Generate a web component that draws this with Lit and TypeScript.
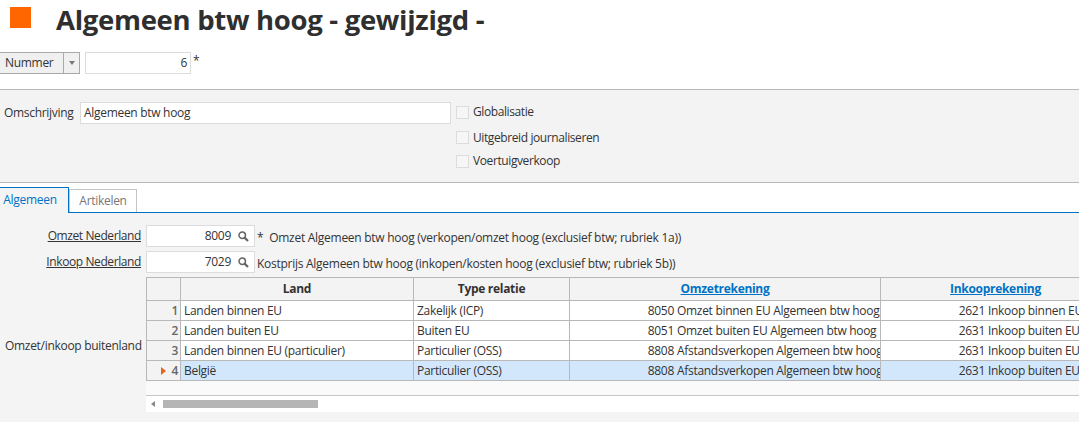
import { LitElement, html, css, svg } from "lit";
import { customElement } from "lit/decorators.js";

const FONT = css`"Open Sans", "Noto Sans", sans-serif`;

const rows = [
  ["1", "Landen binnen EU", "Zakelijk (ICP)", "8050", "Omzet binnen EU Algemeen btw hoog", "2621", "Inkoop binnen EU"],
  ["2", "Landen buiten EU", "Buiten EU", "8051", "Omzet buiten EU Algemeen btw hoog", "2631", "Inkoop buiten EU"],
  ["3", "Landen binnen EU (particulier)", "Particulier (OSS)", "8808", "Afstandsverkopen Algemeen btw hoog", "2631", "Inkoop buiten EU"],
  ["4", "België", "Particulier (OSS)", "8808", "Afstandsverkopen Algemeen btw hoog", "2631", "Inkoop buiten EU"],
];

const lens = svg`<svg class="lens" width="11" height="11" viewBox="0 0 13 13"><circle cx="5" cy="5" r="3.8" fill="none" stroke="#666" stroke-width="1.8"/><path d="M7.8 7.8 L11.8 11.8" stroke="#666" stroke-width="2.6" fill="none"/></svg>`;

@customElement("app-root")
export class AppRoot extends LitElement {
  static styles = css`
    :host { display: block; width: 1079px; height: 422px; overflow: hidden; background: #fff; font: 12px/16px ${FONT}; color: #333; letter-spacing: -0.3px; }
    * { box-sizing: border-box; }
    .head { height: 52px; display: flex; align-items: flex-start; padding: 7px 0 0 10px; }
    .square { width: 21px; height: 21px; background: #ff6600; }
    h1 { margin: -6px 0 0 25px; font: 700 27.5px/38px ${FONT}; letter-spacing: -0.3px; color: #2f2f2f; }
    .numrow { display: flex; align-items: flex-start; border-bottom: 1px solid #b8b8b8; height: 38px; }
    .numbtn { width: 81px; height: 22px; margin-left: -1px; border: 1px solid #a9a9a9; background: #f0f0f0; display: flex; }
    .numbtn .lbl { width: 64px; padding: 2px 0 0 5px; border-right: 1px solid #a9a9a9; }
    .numbtn .arr { flex: 1; display: flex; align-items: center; justify-content: center; }
    .tri { width: 0; height: 0; border: 3.5px solid transparent; border-top: 4px solid #777; border-bottom: 0; }
    .input { background: #fff; border: 1px solid #dcdcdc; height: 22px; display: flex; align-items: center; padding: 0 3px; }
    .num { width: 106px; margin-left: 5px; justify-content: flex-end; }
    .star { margin: 1px 0 0 2px; line-height: 15px; }
    .panel { background: #f3f3f3; height: 93px; border-bottom: 1px solid #b8b8b8; display: grid; grid-template-columns: 80px 371px 1fr; padding-top: 12px; }
    .panel .olabel { padding: 3px 0 0 4px; }
    .checks { display: flex; flex-direction: column; padding: 0 0 0 5px; margin-top: -1px; letter-spacing: -0.4px; }
    .check { display: flex; align-items: center; height: 22px; }
    .check.mid { height: 29px; }
    .check.last { height: 18px; }
    .box { width: 13px; height: 13px; border: 1px solid #dcdcdc; background: #f6f6f6; margin-right: 4px; }
    .tabs { height: 30px; display: flex; align-items: flex-end; border-bottom: 1px solid #0072c6; }
    .tab { display: flex; align-items: center; justify-content: center; }
    .tab.on { width: 69px; height: 26px; margin-bottom: -1px; background: #f4f4f4; color: #0072c6; border-top: 1px solid #0072c6; border-right: 1px solid #0072c6; padding: 0 8px 1px 0; }
    .tab.off { width: 68px; height: 23px; color: #777; border: 1px solid #c4c4c4; border-bottom: 0; padding-bottom: 1px; }
    .body { background: #f4f4f4; height: 209px; padding-top: 12px; }
    .form { display: grid; grid-template-columns: 141px 109px 1fr; column-gap: 5px; grid-auto-rows: 26px; }
    .form .label { text-align: right; text-decoration: underline; padding-top: 3px; letter-spacing: -0.4px; }
    .acct { justify-content: flex-end; gap: 7px; padding-right: 5px; height: 22px; }
    .lens { flex: none; }
    .desc { padding-top: 5px; white-space: nowrap; margin-left: -3px; letter-spacing: -0.27px; }
    .desc .st { margin-right: 3px; }
    .lower { display: flex; }
    .side { width: 146px; padding: 61px 0 0 5px; white-space: nowrap; }
    .gridwrap { width: 933px; overflow: hidden; }
    .grid { display: grid; grid-template-columns: 35px 233px 156px 311px 230px; border-top: 1px solid #b8b8b8; width: 965px; background: #fff; }
    .c { height: 20px; border-right: 1px solid #b8b8b8; border-bottom: 1px solid #b8b8b8; padding: 2px 0 0 3px; white-space: nowrap; overflow: hidden; display: flex; }
    .c.h { height: 23px; background: #f3f3f3; font-weight: 700; justify-content: center; padding: 3px 0 0; }
    .c.h.link { color: #0072c6; text-decoration: underline; }
    .c.rh { background: #f3f3f3; justify-content: flex-end; padding: 2px 2px 0 0; color: #666; font-weight: 600; align-items: flex-start; gap: 5px; }
    .first { border-left: 1px solid #b8b8b8; }
    .c.sel { background: #d2e7fb; }
    .c.rh.sel { background: #f3f3f3; }
    .marker { width: 0; height: 0; border: 4px solid transparent; border-left: 5px solid #e8641c; border-right: 0; margin-top: 4px; }
    .code { width: 101px; flex: none; text-align: right; margin-right: 3px; }
    .foot { height: 15px; background: #fafafa; border-bottom: 1px solid #c8c8c8; }
    .scroll { height: 16px; background: #fff; display: flex; align-items: center; padding-left: 5px; }
    .la { width: 0; height: 0; border: 3px solid transparent; border-right: 4px solid #888; border-left: 0; }
    .thumb { width: 155px; height: 8px; background: #b5b5b5; margin-left: 8px; }
  `;

  render() {
    return html`
      <div class="head"><div class="square"></div><h1>Algemeen btw hoog - gewijzigd -</h1></div>
      <div class="numrow">
        <div class="numbtn"><div class="lbl">Nummer</div><div class="arr"><div class="tri"></div></div></div>
        <div class="input num">6</div><div class="star">*</div>
      </div>
      <div class="panel">
        <div class="olabel">Omschrijving</div>
        <div class="input">Algemeen btw hoog</div>
        <div class="checks">
          <div class="check"><div class="box"></div>Globalisatie</div>
          <div class="check mid"><div class="box"></div>Uitgebreid journaliseren</div>
          <div class="check last"><div class="box"></div>Voertuigverkoop</div>
        </div>
      </div>
      <div class="tabs"><div class="tab on">Algemeen</div><div class="tab off">Artikelen</div></div>
      <div class="body">
        <div class="form">
          <div class="label">Omzet Nederland</div>
          <div class="input acct">8009 ${lens}</div>
          <div class="desc"><span class="st">*</span> Omzet Algemeen btw hoog (verkopen/omzet hoog (exclusief btw; rubriek 1a))</div>
          <div class="label">Inkoop Nederland</div>
          <div class="input acct">7029 ${lens}</div>
          <div class="desc">Kostprijs Algemeen btw hoog (inkopen/kosten hoog (exclusief btw; rubriek 5b))</div>
        </div>
        <div class="lower">
          <div class="side">Omzet/inkoop buitenland</div>
          <div class="gridwrap">
            <div class="grid">
              <div class="c h first"></div>
              <div class="c h">Land</div>
              <div class="c h">Type relatie</div>
              <div class="c h link">Omzetrekening</div>
              <div class="c h link">Inkooprekening</div>
              ${rows.map((r, i) => {
                const sel = i === 3 ? "sel" : "";
                return html`
                  <div class="c rh first ${sel}">${i === 3 ? html`<div class="marker"></div>` : ""}${r[0]}</div>
                  <div class="c ${sel}">${r[1]}</div>
                  <div class="c ${sel}">${r[2]}</div>
                  <div class="c ${sel}"><span class="code">${r[3]}</span>${r[4]}</div>
                  <div class="c ${sel}"><span class="code">${r[5]}</span>${r[6]}</div>
                `;
              })}
            </div>
            <div class="foot"></div>
            <div class="scroll"><div class="la"></div><div class="thumb"></div></div>
          </div>
        </div>
      </div>
    `;
  }
}
